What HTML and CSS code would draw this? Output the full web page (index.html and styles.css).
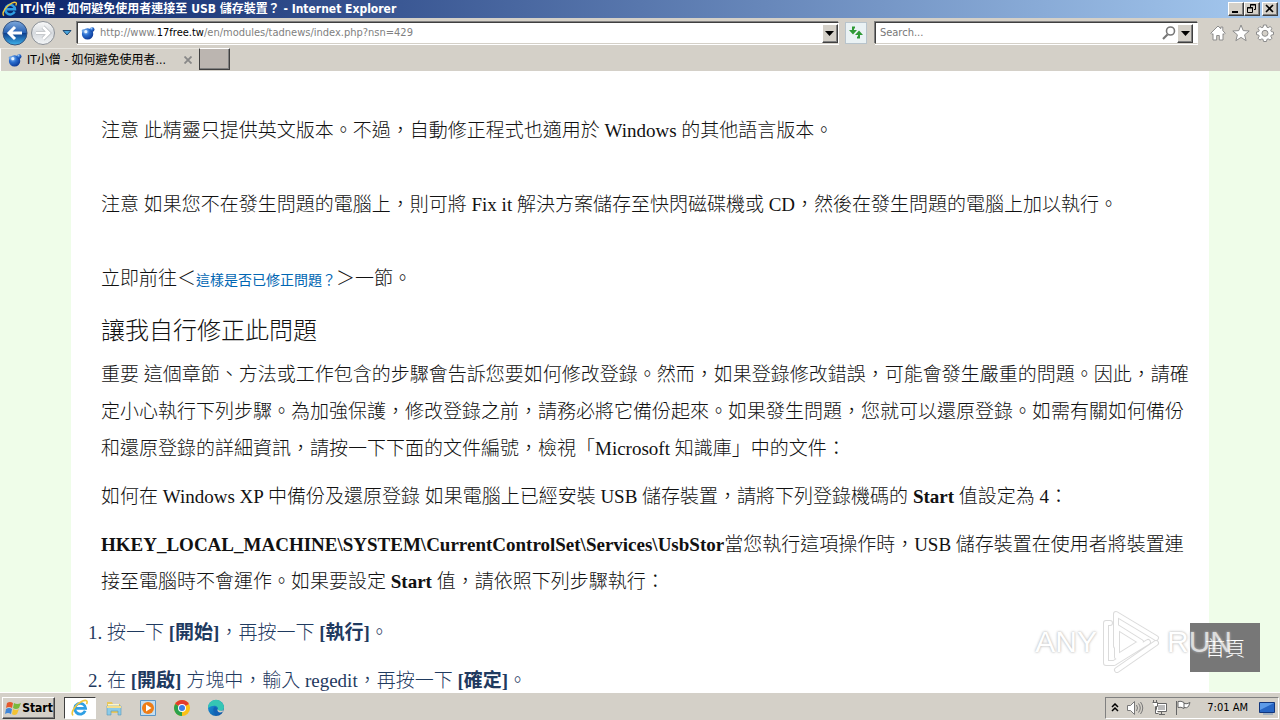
FILE: index.html
```html
<!DOCTYPE html>
<html lang="zh-Hant">
<head>
<meta charset="utf-8">
<meta name="viewport" content="width=device-width, initial-scale=1">
<title>IT小僧 - 如何避免使用者連接至 USB 儲存裝置？</title>
<link rel="stylesheet" href="styles.css">
</head>
<body>
<svg class="defs" width="0" height="0" aria-hidden="true">
  <defs>
    <radialGradient id="ball" cx=".35" cy=".3" r=".8"><stop offset="0" stop-color="#9cc8f8"/><stop offset=".4" stop-color="#2a6fd0"/><stop offset="1" stop-color="#08308c"/></radialGradient>
    <linearGradient id="nav" x1="0" y1="0" x2="0" y2="1"><stop offset="0" stop-color="#7fa9dc"/><stop offset=".48" stop-color="#2862b4"/><stop offset=".52" stop-color="#0f418f"/><stop offset="1" stop-color="#3fb4ec"/></linearGradient>
    <linearGradient id="navoff" x1="0" y1="0" x2="0" y2="1"><stop offset="0" stop-color="#fafafa"/><stop offset=".5" stop-color="#d6dade"/><stop offset="1" stop-color="#f4f6f8"/></linearGradient>
    <linearGradient id="edge" x1="0" y1="0" x2="1" y2="1"><stop offset="0" stop-color="#1b9de2"/><stop offset="1" stop-color="#0c4a9a"/></linearGradient>
    <symbol id="ie" viewBox="0 0 18 18">
      <path d="M14.2 11.8A5.4 5.4 0 1 1 14.6 9.4H5" fill="none" stroke="#2f9fe4" stroke-width="2.8"/>
      <path d="M2.2 16.4C-1 14 4.5 5.2 11.5 2.1c4-1.7 5.6-.2 4 3" fill="none" stroke="#f0c63c" stroke-width="1.6"/>
    </symbol>
    <symbol id="site" viewBox="0 0 16 16">
      <circle cx="7.500" cy="9" r="6.500" fill="url(#ball)"/><circle cx="12.800" cy="4" r="2.600" fill="url(#ball)"/><circle cx="2.600" cy="5.500" r="1.800" fill="#6ba2e4"/><circle cx="5.500" cy="6.500" r="1.800" fill="#e4f2ff"/>
    </symbol>
    <path id="play" d="M13 36V4l40 24M53 33L14 60M7 13H3v40h8L45 32M14 17l24 15-24 15z"/>
  </defs>
</svg>

<header class="titlebar">
  <svg class="title-icon"><use href="#ie"/></svg>
  <h1 class="title-text">IT小僧 - 如何避免使用者連接至 USB 儲存裝置？ - Internet Explorer</h1>
  <div class="window-buttons">
    <button class="bevel win-btn" aria-label="Minimize"><svg width="10" height="10"><path d="M1 8h6" stroke="#000" stroke-width="2"/></svg></button>
    <button class="bevel win-btn" aria-label="Restore"><svg width="10" height="10" fill="none" stroke="#000"><path d="M3.5 3V.5h5v5H7M3 1h6M.5 3.5h5v5h-5zM0 4h6"/></svg></button>
    <button class="bevel win-btn win-close" aria-label="Close"><svg width="10" height="10"><path d="M1 1l7 7M8 1L1 8" stroke="#000" stroke-width="1.6"/></svg></button>
  </div>
</header>

<nav class="toolbar" aria-label="Navigation">
  <div class="history">
    <button class="plain" aria-label="Back"><svg width="26" height="26"><circle cx="13" cy="13" r="12" fill="url(#nav)" stroke="#35537f"/><path d="M13 7l-6 6 6 6M7.500 13H20" fill="none" stroke="#fff" stroke-width="3"/></svg></button>
    <button class="plain" aria-label="Forward"><svg width="26" height="26"><circle cx="13" cy="13" r="11.500" fill="url(#navoff)" stroke="#8b9096"/><path d="M13 7l6 6-6 6M18.500 13H6" fill="none" stroke="#b5b9bd" stroke-width="4"/><path d="M13 7l6 6-6 6M18.500 13H6" fill="none" stroke="#fff" stroke-width="2.600"/></svg></button>
    <button class="plain recent" aria-label="Recent pages"><svg width="10" height="6"><path d="M1 .5h8L5 5z" fill="#48a4dc" stroke="#1d4770"/></svg></button>
  </div>
  <div class="field address">
    <svg class="small-icon"><use href="#site"/></svg>
    <div class="url" role="textbox" aria-label="Address" contenteditable="true" spellcheck="false">http://www.<span class="domain">17free.tw</span>/en/modules/tadnews/index.php?nsn=429</div>
    <button class="bevel drop" aria-label="Show address list"><svg width="9" height="5"><path d="M0 0h9L4.500 5z"/></svg></button>
  </div>
  <button class="refresh" aria-label="Refresh"><svg width="16" height="16" fill="none" stroke="#2f9a36" stroke-width="2"><path d="M7 2.500H5V6M9 12.500h2V9"/><path d="M1 5h8L5 9.500zM7 10h8l-4-4.500z" fill="#2f9a36" stroke="none"/></svg></button>
  <div class="field search">
    <input class="search-input" type="text" placeholder="Search..." aria-label="Search">
    <svg class="lens" width="14" height="14" fill="none" stroke="#777"><circle cx="8.500" cy="5" r="4" stroke-width="1.600"/><path d="M5.500 8.500L1 13" stroke-width="2.200"/></svg>
    <button class="bevel drop" aria-label="Search options"><svg width="9" height="5"><path d="M0 0h9L4.500 5z"/></svg></button>
  </div>
  <div class="commands">
    <button class="plain" aria-label="Home"><svg width="16" height="16"><path d="M8 1L.8 8.200l1.200 1.300 1-.8V15h3.700v-4.500h2.600V15H13V8.700l1 .8 1.200-1.300-2.400-2.500V2h-2v1.700z" fill="#fff" stroke="#8c8c8c"/></svg></button>
    <button class="plain" aria-label="Favorites"><svg width="18" height="18"><path d="M9 1l2.200 5.600 6 .4-4.600 3.800 1.500 5.900L9 13.400l-5.100 3.300 1.500-5.900L.8 7l6-.4z" fill="#fff" stroke="#8c8c8c"/></svg></button>
    <button class="plain" aria-label="Tools"><svg width="18" height="18"><path d="M7.500 1h3l.4 2.200 1.300.5 1.900-1.200 1.900 1.900-1.200 1.900.5 1.300 2.200.4v2.600l-2.200.4-.5 1.300 1.200 1.900-1.900 1.900-1.900-1.200-1.300.5-.4 2.100h-3l-.4-2.100-1.300-.5-1.900 1.200L2 14.200l1.200-1.900-.5-1.300-2.200-.4V8l2.200-.4.5-1.300L2 4.400l1.900-1.900 1.900 1.200 1.300-.5z" fill="#fff" stroke="#8c8c8c"/><circle cx="9" cy="9.300" r="3" fill="#d4d0c8" stroke="#8c8c8c"/></svg></button>
  </div>
</nav>

<div class="tabs">
  <div class="tab">
    <svg class="small-icon"><use href="#site"/></svg>
    <span class="tab-title">IT小僧 - 如何避免使用者...</span>
    <button class="plain" aria-label="Close tab"><svg width="8" height="8"><path d="M.5.500l7 7M7.500.500l-7 7" stroke="#888" stroke-width="1.800"/></svg></button>
  </div>
  <button class="new-tab" aria-label="New tab"></button>
</div>

<main class="viewport">
  <article class="article">
    <p class="note">注意 此精靈只提供英文版本。不過，自動修正程式也適用於 Windows 的其他語言版本。</p>
    <p class="note">注意 如果您不在發生問題的電腦上，則可將 Fix it 解決方案儲存至快閃磁碟機或 CD，然後在發生問題的電腦上加以執行。</p>
    <p class="jump">立即前往＜<a class="link" href="#fixed">這樣是否已修正問題？</a>＞一節。</p>
    <h2 class="heading">讓我自行修正此問題</h2>
    <p class="para">重要 這個章節、方法或工作包含的步驟會告訴您要如何修改登錄。然而，如果登錄修改錯誤，可能會發生嚴重的問題。因此，請確定小心執行下列步驟。為加強保護，修改登錄之前，請務必將它備份起來。如果發生問題，您就可以還原登錄。如需有關如何備份和還原登錄的詳細資訊，請按一下下面的文件編號，檢視「Microsoft 知識庫」中的文件：</p>
    <p class="para">如何在 Windows XP 中備份及還原登錄 如果電腦上已經安裝 USB 儲存裝置，請將下列登錄機碼的 <b>Start</b> 值設定為 4：</p>
    <p class="para"><b>HKEY_LOCAL_MACHINE\SYSTEM\CurrentControlSet\Services\UsbStor</b>當您執行這項操作時，USB 儲存裝置在使用者將裝置連接至電腦時不會運作。如果要設定 <b>Start</b> 值，請依照下列步驟執行：</p>
    <ol class="steps">
      <li>按一下 <b>[開始]</b>，再按一下 <b>[執行]</b>。</li>
      <li>在 <b>[開啟]</b> 方塊中，輸入 regedit，再按一下 <b>[確定]</b>。</li>
    </ol>
  </article>
  <a class="home-link" href="#home">首頁</a>
  <div class="watermark">
    <span>ANY</span>
    <svg width="58" height="64" fill="none" stroke-linejoin="round" stroke-linecap="round"><use href="#play" stroke="#d0d0d0" stroke-width="6"/><use href="#play" stroke="#fff" stroke-width="4"/></svg>
    <span>RUN</span>
  </div>
</main>

<footer class="taskbar">
  <button class="bevel start"><svg width="18" height="16"><path d="M3 3q3-2 6 0L8 8Q5 6 2 8z" fill="#e4582c"/><path d="M10 3q3 2 7 0l-2 5q-3 2-6 0z" fill="#79b93c"/><path d="M2 9q3-2 6 0l-1 5q-3-2-6 0z" fill="#3f86d8"/><path d="M9 9q3 2 6 0l-2 5q-3 2-5 0z" fill="#f3c332"/></svg>Start</button>
  <div class="tasks">
    <button class="task active" aria-label="Internet Explorer"><svg width="18" height="18"><use href="#ie"/></svg></button>
    <button class="task" aria-label="Explorer"><svg width="18" height="18"><path d="M2 3h5l1 2h7v9H2z" fill="#e8c75c"/><path d="M3 5h11v3H3z" fill="#fff6c8"/><path d="M2 7h14v9h-3v-4H6v4H2z" fill="#8ccbe8" stroke="#5799b8" stroke-width=".6"/><path d="M2 7h14v2H2z" fill="#f6df8b"/></svg></button>
    <button class="task" aria-label="Media Player"><svg width="18" height="18"><path d="M1.500 1.500h15v15h-15z" fill="#c5def0" stroke="#5a96c8"/><circle cx="9" cy="9" r="6" fill="#ef7d16"/><path d="M7 5.500l5.500 3.500L7 12.500z" fill="#fff"/></svg></button>
    <button class="task" aria-label="Chrome"><svg width="18" height="18"><circle cx="9" cy="9" r="8" fill="#fbc116"/><path d="M9 9L2.100 5A8 8 0 0 1 15.900 5z" fill="#e33b2e"/><path d="M9 9L9 17A8 8 0 0 1 2.100 5z" fill="#2ba24c"/><circle cx="9" cy="9" r="4" fill="#fff"/><circle cx="9" cy="9" r="3" fill="#3c7de6"/></svg></button>
    <button class="task" aria-label="Edge"><svg width="18" height="18"><circle cx="9" cy="9" r="8" fill="url(#edge)"/><path d="M1 9A8 8 0 0 1 17 8.500c0 3-3 4-6.500 3 2-4-3-7-9.500-2.500z" fill="#35c6b4"/><path d="M17 11c-3 2-7 1.500-7-1 0-1-1-2-2-2-3 1-2 7 3 8" fill="#1261b5"/><path d="M17 10.500c-2 2-6 1.500-6.500-.5-.6 3 2 4 5 3z" fill="#d4d0c8"/></svg></button>
  </div>
  <div class="tray">
    <svg width="8" height="10" fill="none" stroke="#000" stroke-width="1.500"><path d="M1 4l3-3 3 3M1 8l3-3 3 3"/></svg>
    <svg width="18" height="16" fill="#fff" stroke="#777"><path d="M1.500 5.500h3l4-4v13l-4-4h-3z"/><path d="M10.500 5q2 3 0 6M12.500 3.500q3.500 4.500 0 9M14.500 2q4.500 6 0 12" fill="none"/></svg>
    <svg width="17" height="16" fill="#fff" stroke="#666"><path d="M5.500 3.500h10v8h-10zM8 14.500h6M10.500 12v2" /><path d="M7 5h7v5H7z" fill="#bbb" stroke="none"/><path d="M1.500 2.500h5v4h-2v7h3M2.500 0v2M5.500 0v2"/></svg>
    <svg width="17" height="16" fill="#fff" stroke="#666"><path d="M1.500 1v14M3 1.500q3-1 6 1v6q-3-2-6-1zM9 3.500q3 1 6-1l-1.500 4q-2 2-4.500 1"/></svg>
    <time class="clock">7:01 AM</time>
    <svg width="16" height="14"><path d="M.5 1.500h15v10H.5z" fill="#2766c4" stroke="#12367c"/><path d="M1 2h14L1 9z" fill="#5d9be8"/><path d="M4 13h10" stroke="#6d8fb8"/></svg>
  </div>
</footer>
</body>
</html>
```
FILE: styles.css
```css
* { box-sizing: border-box; }

body {
  display: flex;
  flex-direction: column;
  height: 100vh;
  margin: 0;
  overflow: hidden;
  background: #d4d0c8;
  color: #000;
  font: 11px/14px "DejaVu Sans Condensed", "Noto Sans CJK TC", sans-serif;
}

button, input { font: inherit; color: inherit; }
button { display: flex; align-items: center; justify-content: center; padding: 0; border: 0; background: none; }
svg { flex: none; }
b { font-weight: 700; }
.defs { position: absolute; }

.bevel {
  background: #d4d0c8;
  border: 1px solid;
  border-color: #fff #404040 #404040 #fff;
  box-shadow: inset -1px -1px #808080;
}

.titlebar {
  display: flex;
  align-items: center;
  height: 18px;
  flex: none;
  padding: 0 2px;
  background: linear-gradient(90deg, #0a246a, #a6caf0);
}
.title-icon { width: 16px; height: 16px; }
.title-text {
  flex: 1;
  margin: 0 0 0 2px;
  color: #fff;
  font-size: 12px;
  line-height: 18px;
  white-space: nowrap;
}
.window-buttons { display: flex; }
.win-btn { width: 16px; height: 14px; }
.win-close { margin-left: 2px; }

.toolbar { display: flex; align-items: center; height: 30px; flex: none; padding: 0 6px 0 2px; }
.history { display: flex; align-items: center; gap: 2px; width: 74px; }
.recent { margin-left: 4px; }
.field {
  display: flex;
  align-items: center;
  height: 22px;
  min-width: 0;
  background: #fff;
  border: 1px solid;
  border-color: #404040 #fff #d4d0c8 #404040;
  box-shadow: 0 1px #fff, -1px -1px #808080;
}
.address { flex: 764 0 0; padding-left: 3px; margin-left: 1px; }
.search { flex: 316 0 0; padding-left: 4px; padding-right: 4px; }
.small-icon { width: 14px; height: 14px; }
.url { flex: 1; margin-left: 5px; color: #808080; outline: 0; white-space: nowrap; overflow: hidden; }
.domain { color: #000; }
.drop { width: 16px; height: 19px; }
.refresh { width: 22px; height: 22px; margin: 0 8px 0 6px; background: #eaf2f4; border: 1px solid #b8c4cc; }
.search-input { flex: 1; min-width: 0; padding: 0; border: 0; outline: 0; background: none; }
.search-input::placeholder { color: #777; opacity: 1; }
.lens { margin-right: 1px; }
.commands { display: flex; align-items: center; gap: 6px; margin-left: 12px; }

.tabs { display: flex; height: 23px; flex: none; }
.tab {
  display: flex;
  align-items: center;
  width: 199px;
  padding: 0 7px;
  border-left: 1px solid #fff;
  border-top: 1px solid #e8e6e0;
}
.tab-title { flex: 1; margin-left: 5px; font-size: 12px; white-space: nowrap; }
.new-tab { width: 31px; height: 22px; background: #bbb5b0; border: 1px solid #404040; border-top-color: #fff; box-shadow: inset -1px -1px #808080; }

.viewport { position: relative; flex: 1; min-height: 0; overflow: hidden; padding: 0 71px; background: #effde9; }
.article {
  min-height: 100%;
  padding: 41px 12px 0 30px;
  background: #fff;
  color: #111;
  font: 300 19px/37px "Liberation Serif", "Noto Sans CJK TC", serif;
}
.note { margin: 0 0 37px; }
.jump { margin: 0 0 14px; }
.link { color: #0066b3; font-size: 14px; font-weight: 400; text-decoration: none; }
.heading { margin: 0 0 6px; font-size: 24px; font-weight: 300; line-height: 37px; }
.para { margin: 0 0 11px; }
.steps { margin: 14px 0 0 6px; padding: 0; color: #1f3a5f; }
.steps li { margin-bottom: 11px; }

.home-link {
  position: absolute;
  right: 20px;
  bottom: 20px;
  padding: 6px 15px;
  background: #777;
  color: #fff;
  font: 300 20px/37px "Noto Sans CJK TC", sans-serif;
  text-decoration: none;
}
.watermark {
  position: absolute;
  right: 48px;
  bottom: 18px;
  display: flex;
  align-items: center;
  gap: 6px;
  color: #fff;
  font: 30px/64px "Liberation Sans Narrow", "Liberation Sans", sans-serif;
  text-shadow: 0 0 2px #aaa, 0 0 3px #bbb;
  opacity: .75;
  pointer-events: none;
}

.taskbar { display: flex; align-items: center; height: 28px; flex: none; padding: 2px 1px 0 2px; border-top: 1px solid #fff; }
.start { width: 53px; height: 22px; font-weight: bold; font-size: 12px; }
.tasks { display: flex; flex: 1; margin-left: 9px; gap: 2px; }
.task { width: 32px; height: 22px; }
.active { background: #fff; border: 1px solid; border-color: #404040 #fff #fff #404040; }
.tray {
  display: flex;
  align-items: center;
  gap: 7px;
  height: 22px;
  padding: 0 3px 0 5px;
  border: 1px solid;
  border-color: #808080 #fff #fff #808080;
}
.clock { margin: 0 4px 0 8px; }
```
